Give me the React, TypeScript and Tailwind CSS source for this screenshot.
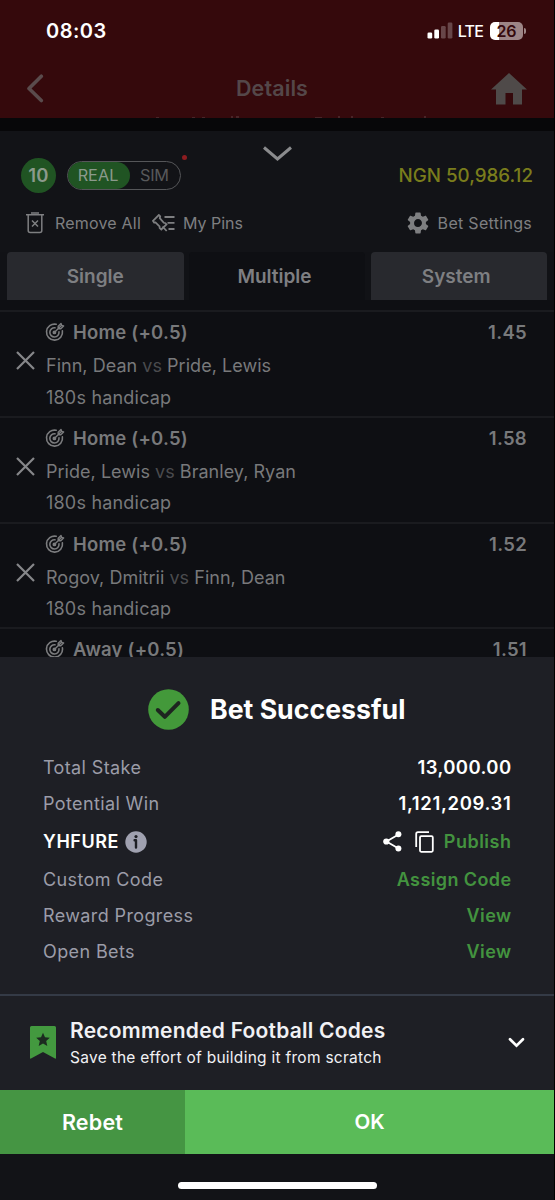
import type { ReactNode } from "react";

type Bet = { pick: string; odds: string; home: string; away: string; market: string };

const bets: Bet[] = [
  { pick: "Home (+0.5)", odds: "1.45", home: "Finn, Dean", away: "Pride, Lewis", market: "180s handicap" },
  { pick: "Home (+0.5)", odds: "1.58", home: "Pride, Lewis", away: "Branley, Ryan", market: "180s handicap" },
  { pick: "Home (+0.5)", odds: "1.52", home: "Rogov, Dmitrii", away: "Finn, Dean", market: "180s handicap" },
];

function TargetIcon() {
  return (
    <svg className="-ml-px" width="20" height="20" viewBox="0 0 20 20" fill="none" stroke="#7b7c7e" strokeWidth="1.6" strokeLinecap="round">
      <path d="M11.200 2.300A8 8 0 1 0 17.400 8.800" />
      <path d="M10 5.800A4.600 4.600 0 1 0 14 9.900" />
      <circle cx="9.400" cy="10.400" r="1.100" fill="#7b7c7e" />
      <path d="M9.600 10.200l7-7M13.200 6.700V4.200l2.800-2.800.7 1.900 1.900.7-2.800 2.800z" strokeWidth="1.400" strokeLinejoin="round" />
    </svg>
  );
}

function Header() {
  return (
    <div className="h-[118px] bg-[#35090c] overflow-hidden">
      <div className="h-[61px] pl-[46px] pr-[28px] flex items-center justify-between text-white">
        <span className="text-[20px] leading-6 font-semibold tracking-[0.5px]">08:03</span>
        <div className="flex items-center">
          <svg width="26" height="17" viewBox="0 0 26 17" fill="#fff">
            <rect x="0.500" y="10.500" width="4.700" height="6" rx="1.300" />
            <rect x="7.300" y="7.500" width="4.700" height="9" rx="1.300" />
            <rect x="14" y="4" width="4.700" height="12.500" rx="1.300" opacity="0.25" />
            <rect x="20.700" y="0.500" width="4.700" height="16" rx="1.300" opacity="0.25" />
          </svg>
          <span className="ml-[5px] text-[16px] leading-5 font-medium tracking-[-0.800px]">LTE</span>
          <div className="ml-[7px] w-[33px] h-[18px] rounded-[5px] bg-[linear-gradient(90deg,#fff_26%,#9d8586_26%)] flex items-center justify-center text-[16px] leading-none font-semibold text-[#35090c]">26</div>
          <div className="ml-px w-[2px] h-[6px] rounded-r-full bg-[#9d8586]" />
        </div>
      </div>
      <div className="h-[55px] pl-[26px] pr-[27px] flex items-center justify-between">
        <svg width="18" height="29" viewBox="0 0 18 29" fill="none" stroke="#5a4b4c" strokeWidth="3.600" strokeLinecap="round" strokeLinejoin="round">
          <path d="M15.300 2.200 3 14.500l12.300 12" />
        </svg>
        <span className="pl-[9px] -mt-px text-[21.500px] leading-7 font-semibold tracking-[0.1px] text-[#544749]">Details</span>
        <svg width="36" height="32" viewBox="0 0 36 32" fill="#4f4a49">
          <path d="M18 0 36 16.500h-5V31.500h-9V20h-7.500v11.500H5V16.500H0z" />
        </svg>
      </div>
      <svg className="block" width="555" height="2" viewBox="0 0 555 2" fill="#4a2528">
        <path d="M156 1h3v1h-3zM192 1h3v1h-3zM202 1h3v1h-3zM231 0h2v2h-2zM236 0h3v2h-3zM315 1h7v1h-7zM338 0h2v2h-2zM351 0h2v2h-2zM381 1h3v1h-3zM424 0h2v2h-2z" />
      </svg>
    </div>
  );
}

function Toolbar() {
  return (
    <div className="h-[121px] shrink-0 bg-[#121317] relative text-[#7e7f81]">
      <svg className="absolute left-[262px] top-[14px]" width="31" height="18" viewBox="0 0 31 18" fill="none" stroke="#8a8b8d" strokeWidth="3">
        <path d="M2 2.500l13.500 11.500L29 2.500" />
      </svg>
      <div className="absolute left-[182px] top-[24px] size-[5px] rounded-full bg-[#8d1c20]" />
      <div className="h-[69px] pt-[20px] pl-[21px] pr-[21px] flex items-center">
        <div className="size-[35px] rounded-full bg-[#205423] flex items-center justify-center text-[18.500px] font-semibold tracking-[0.3px] text-[#8b9a8c]">10</div>
        <div className="ml-[11px] w-[114px] h-[29px] rounded-full border-[1.500px] border-[#555659] flex items-center text-[16.300px]">
          <span className="w-[62px] h-full pr-[2px] rounded-full bg-[#205423] flex items-center justify-center text-[#8b9a8c]">REAL</span>
          <span className="ml-[10px] tracking-[-0.300px] text-[#58595b]">SIM</span>
        </div>
        <span className="ml-auto mt-px text-[18.800px] text-[#7a7d1c] font-medium">NGN 50,986.12</span>
      </div>
      <div className="h-[45px] pl-[26px] pr-[22px] flex items-center text-[16px]">
        <svg width="18" height="22" viewBox="0 0 18 22" fill="none" stroke="currentColor" strokeWidth="1.500">
          <path d="M0 2.800h18M5 1h8M2.200 3v15.500q0 2 2 2h9.600q2 0 2-2V3M6 8.500l6 6M12 8.500l-6 6" />
        </svg>
        <span className="ml-[11px] tracking-[0.200px]">Remove All</span>
        <svg className="ml-[11px]" width="23" height="18" viewBox="0 0 23 18" fill="none" stroke="currentColor" strokeWidth="1.800">
          <path d="M12.500 3h10M15.500 8.800h7M16.500 15h6" />
          <path d="M1 6.800 6.800 1l1.400 1.400-.4 1.800 4 4.600 1.700.4 1 1.300-5.200 5-1.600-1.400-.2-1.700-4-4-1.400.2zM10.500 12.500l4.200 4.500" />
        </svg>
        <span className="ml-[8px]">My Pins</span>
        <svg className="ml-auto" width="22" height="22" viewBox="2 2 20 20" fill="currentColor">
          <path d="M19.140 12.940c.04-.3.060-.61.060-.94 0-.32-.02-.64-.07-.94l2.030-1.580a.49.49 0 0 0 .12-.61l-1.920-3.320a.488.488 0 0 0-.59-.22l-2.390.96c-.5-.38-1.030-.7-1.620-.94l-.36-2.540a.484.484 0 0 0-.48-.41h-3.840c-.24 0-.43.17-.47.41l-.36 2.540c-.59.24-1.130.57-1.620.94l-2.390-.96c-.22-.08-.47 0-.59.22L2.740 8.870c-.12.21-.08.47.12.61l2.030 1.580c-.05.3-.09.63-.09.94s.02.64.07.94l-2.030 1.580a.49.49 0 0 0-.12.61l1.920 3.320c.12.22.37.29.59.22l2.390-.96c.5.38 1.030.7 1.620.94l.36 2.540c.05.24.24.41.48.41h3.840c.24 0 .44-.17.47-.41l.36-2.540c.59-.24 1.130-.56 1.620-.94l2.390.96c.22.08.47 0 .59-.22l1.920-3.320c.12-.22.07-.47-.12-.61zM12 15.600A3.610 3.610 0 0 1 8.400 12c0-1.980 1.620-3.600 3.600-3.600s3.600 1.620 3.600 3.600-1.620 3.600-3.600 3.600z" />
        </svg>
        <span className="ml-[9px] tracking-[0.300px]">Bet Settings</span>
      </div>
    </div>
  );
}

function Tabs() {
  return (
    <div className="h-[58.300px] shrink-0 bg-[#0e0f13]">
      <div className="h-[48px] px-[7px] bg-[#111216] flex justify-between text-[19px] font-semibold text-[#7e7f82]">
        <div className="w-[176.500px] pt-[2px] rounded-t bg-[#28292e] flex items-center justify-center">Single</div>
        <div className="w-[176.500px] pt-[2px] pr-[5px] rounded-t bg-[#0e0f13] flex items-center justify-center">Multiple</div>
        <div className="w-[176.500px] pt-[2px] pr-[5px] rounded-t bg-[#28292e] flex items-center justify-center">System</div>
      </div>
    </div>
  );
}

function BetRow({ bet }: { bet: Bet }) {
  return (
    <div className="h-[105.700px] border-t-2 border-[#1a1b1f] flex text-[#78797b]">
      <div className="w-[46px] pt-[39px] pl-[16px]">
        <svg width="19" height="19" viewBox="0 0 19 19" stroke="#86878a" strokeWidth="2.200">
          <path d="M1 1l17 17M18 1L1 18" />
        </svg>
      </div>
      <div className="flex-1">
        <div className="pt-[8px] pr-[27px] flex items-center text-[18.500px] leading-6 font-semibold">
          <TargetIcon />
          <span className="ml-[8px] tracking-[0.200px]">{bet.pick}</span>
          <span className="ml-auto tracking-[0.300px]">{bet.odds}</span>
        </div>
        <div className="mt-[10px] text-[18px] leading-6 tracking-[0.030px]">
          {bet.home} <span className="text-[#4a4b4e]">vs</span> {bet.away}
        </div>
        <div className="mt-[7.500px] text-[18px] leading-6 tracking-[0.200px]">{bet.market}</div>
      </div>
    </div>
  );
}

function Line({ label, children, tall }: { label: ReactNode; children: ReactNode; tall?: boolean }) {
  return (
    <div className={tall ? "h-[40px] flex items-center justify-between" : "h-[36px] flex items-center justify-between"}>
      <span className="text-[#9b9ca8] tracking-[0.380px]">{label}</span>
      <span className="font-semibold flex items-center tracking-[0.400px]">{children}</span>
    </div>
  );
}

function SuccessSheet() {
  return (
    <div className="h-[337px] shrink-0 bg-[#1e1f25] text-white text-[18px]">
      <div className="pt-[32px] h-[93px] pl-[148px] flex items-start">
        <svg width="41" height="41" viewBox="0 0 41 41">
          <circle cx="20.500" cy="20.500" r="20.300" fill="#43993a" />
          <path d="M9.800 21l7 6.800L30.500 14.200" fill="none" stroke="#1e2420" strokeWidth="4" strokeLinecap="round" strokeLinejoin="round" />
        </svg>
        <span className="ml-[21px] mt-[2px] text-[26.700px] leading-9 font-bold">Bet Successful</span>
      </div>
      <div className="pl-[43px] pr-[42.500px]">
        <Line label="Total Stake"><span className="text-[18.500px]">13,000.00</span></Line>
        <Line label="Potential Win"><span className="text-[18.500px] tracking-[0.650px]">1,121,209.31</span></Line>
        <Line
          tall
          label={
            <span className="flex items-center text-white font-semibold tracking-[0.550px]">
              YHFURE
              <svg className="ml-[6px]" width="22" height="22" viewBox="0 0 22 22">
                <circle cx="11" cy="11" r="10.700" fill="#a0a1b0" />
                <circle cx="11" cy="5.600" r="1.600" fill="#1e1f25" />
                <path d="M9.600 9.200h1.400v7.300" stroke="#1e1f25" strokeWidth="2.400" strokeLinejoin="round" strokeLinecap="round" fill="none" />
              </svg>
            </span>
          }
        >
          <svg className="mr-[13px]" width="19" height="21" viewBox="0 0 19 21" fill="#fff">
            <path d="M15.500 3.500 3.500 10.500l12 7" fill="none" stroke="#fff" strokeWidth="1.800" />
            <circle cx="15.400" cy="3.300" r="3" />
            <circle cx="3.300" cy="10.500" r="3.100" />
            <circle cx="15.400" cy="17.600" r="3" />
          </svg>
          <svg className="mr-[9.500px]" width="19" height="22" viewBox="0 0 19 22" fill="none" stroke="#fff" strokeWidth="1.800">
            <path d="M1.200 16V3q0-1.800 1.800-1.800h11" />
            <rect x="5" y="5.200" width="12.800" height="15.600" rx="1.200" />
          </svg>
          <span className="text-[#43933f] tracking-[0.500px]">Publish</span>
        </Line>
        <Line label="Custom Code"><span className="text-[#43933f]">Assign Code</span></Line>
        <Line label="Reward Progress"><span className="text-[#43933f]">View</span></Line>
        <Line label="Open Bets"><span className="text-[#43933f]">View</span></Line>
      </div>
    </div>
  );
}

function RecommendedCodes() {
  return (
    <div className="h-[96px] shrink-0 bg-[#1e1f25] border-t-2 border-[#343a46] pl-[30px] pr-[29px] flex items-center text-[#f1f1f4]">
      <svg width="26" height="33" viewBox="0 0 26 33">
        <path d="M1.500 0h23q1.500 0 1.500 1.500V32q0 1-1 .5L13 26 1 32.500q-1 .5-1-.5V1.500Q0 0 1.500 0z" fill="#43993f" />
        <path d="M13 6.800l2 4.500 4.800.5-3.600 3.300 1.100 4.900-4.300-2.500-4.300 2.500 1.100-4.900-3.600-3.300 4.800-.5z" fill="#1c2a20" />
      </svg>
      <div className="ml-[14px] mt-[2px]">
        <div className="text-[21px] leading-7 font-semibold tracking-[0.230px]">Recommended Football Codes</div>
        <div className="text-[15.500px] leading-6 mt-px tracking-[0.270px]">Save the effort of building it from scratch</div>
      </div>
      <svg className="ml-auto" width="17" height="12" viewBox="0 0 17 12" fill="none" stroke="#fff" strokeWidth="2.700" strokeLinecap="round">
        <path d="M2 2.200l6.500 6.500L15 2.200" />
      </svg>
    </div>
  );
}

export default function App() {
  return (
    <div className="w-[555px] h-[1200px] overflow-hidden bg-[#0e0f13] font-['Inter',sans-serif] border-r border-black flex flex-col">
      <div className="shrink-0"><Header /></div>
      <div className="h-[13px] shrink-0 bg-[#070709]" />
      <Toolbar />
      <Tabs />
      <div className="h-[346.700px] shrink-0 overflow-hidden">
        {bets.map((bet) => (
          <BetRow key={bet.home} bet={bet} />
        ))}
        <div className="border-t-2 border-[#1a1b1f] pt-[8px] pl-[46px] pr-[27px] flex items-center text-[18.500px] leading-6 font-semibold text-[#78797b]">
          <TargetIcon />
          <span className="ml-[8px] tracking-[0.200px]">Away (+0.5)</span>
          <span className="ml-auto tracking-[0.300px]">1.51</span>
        </div>
      </div>
      <SuccessSheet />
      <RecommendedCodes />
      <div className="h-[64px] shrink-0 flex text-[20.500px] font-semibold text-white">
        <div className="w-[185px] bg-[#459543] flex items-center justify-center text-[21.500px] tracking-[0.200px]">Rebet</div>
        <div className="flex-1 bg-[#5abb58] flex items-center justify-center">OK</div>
      </div>
      <div className="h-[46px] shrink-0 bg-[#121317] pt-[28px] pl-[178px]">
        <div className="w-[199px] h-[7px] rounded-full bg-white" />
      </div>
    </div>
  );
}
